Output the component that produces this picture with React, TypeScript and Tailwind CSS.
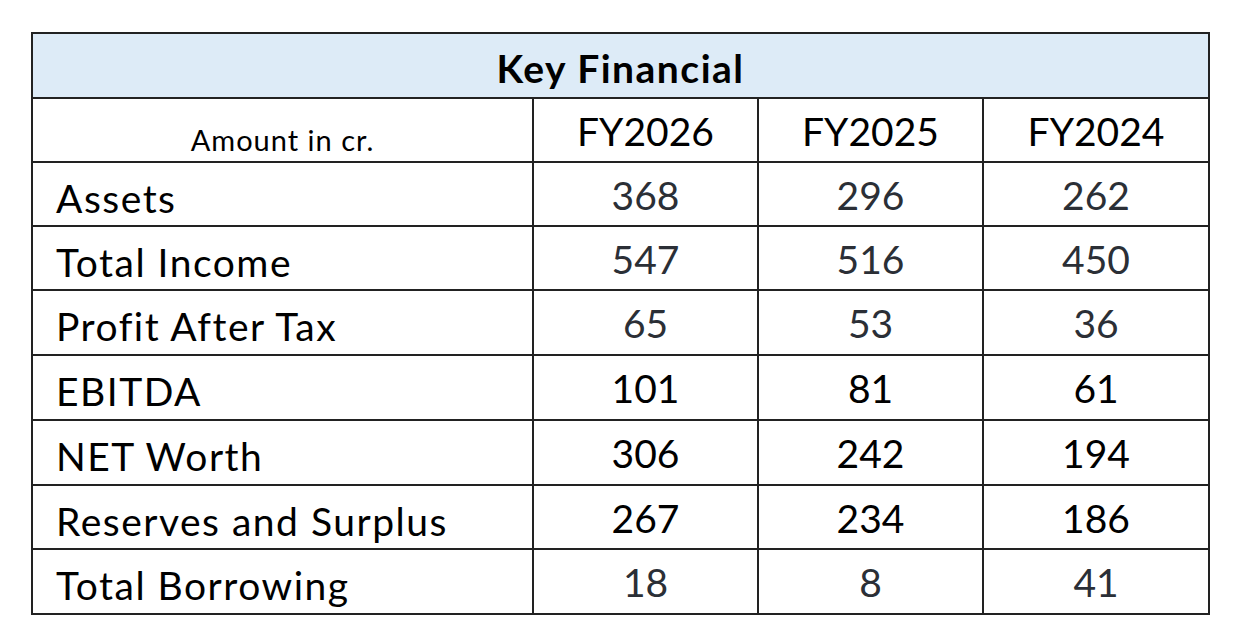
import React from "react";

interface Row {
  label: string;
  values: string[];
  dim: boolean;
}

const rows: Row[] = [
  { label: "Assets", values: ["368", "296", "262"], dim: true },
  { label: "Total Income", values: ["547", "516", "450"], dim: true },
  { label: "Profit After Tax", values: ["65", "53", "36"], dim: true },
  { label: "EBITDA", values: ["101", "81", "61"], dim: false },
  { label: "NET Worth", values: ["306", "242", "194"], dim: false },
  { label: "Reserves and Surplus", values: ["267", "234", "186"], dim: false },
  { label: "Total Borrowing", values: ["18", "8", "41"], dim: true },
];

const heights = ["h-[64px]", "h-[64px]", "h-[65px]", "h-[65px]", "h-[65px]", "h-[64px]", "h-[65px]"];

export default function App() {
  return (
    <div className="min-h-screen bg-white pt-[32px] pl-[31px] font-[Lato,sans-serif] text-black">
      <table className="w-[1177px] table-fixed border-collapse border-2 border-[#222222]">
        <colgroup>
          <col className="w-[501px]" />
          <col className="w-[225px]" />
          <col className="w-[225px]" />
          <col className="w-[226px]" />
        </colgroup>
        <thead>
          <tr className="h-[65px] bg-[#ddebf7]">
            <th colSpan={4} className="border-2 border-[#222222] pt-[6px] text-center text-[39px] font-bold leading-none tracking-[1.5px]">
              Key Financial
            </th>
          </tr>
          <tr className="h-[64px]">
            <th className="border-2 border-[#222222] pt-[18px] text-center text-[29px] font-normal leading-none tracking-[1px]">
              Amount in cr.
            </th>
            {["FY2026", "FY2025", "FY2024"].map((y) => (
              <th key={y} className="border-2 border-[#222222] pt-[2px] text-center text-[39px] font-normal leading-none">
                {y}
              </th>
            ))}
          </tr>
        </thead>
        <tbody>
          {rows.map((r, i) => (
            <tr key={r.label} className={heights[i]}>
              <td className="border-2 border-[#222222] pl-[23px] pt-[8px] text-left text-[39px] leading-none tracking-[1.5px]">
                {r.label}
              </td>
              {r.values.map((v, j) => (
                <td
                  key={j}
                  className={
                    r.dim
                      ? "border-2 border-[#222222] pt-[2px] text-center text-[39px] leading-none text-[#2b2f36]"
                      : "border-2 border-[#222222] pt-[2px] text-center text-[39px] leading-none text-black"
                  }
                >
                  {v}
                </td>
              ))}
            </tr>
          ))}
        </tbody>
      </table>
    </div>
  );
}
